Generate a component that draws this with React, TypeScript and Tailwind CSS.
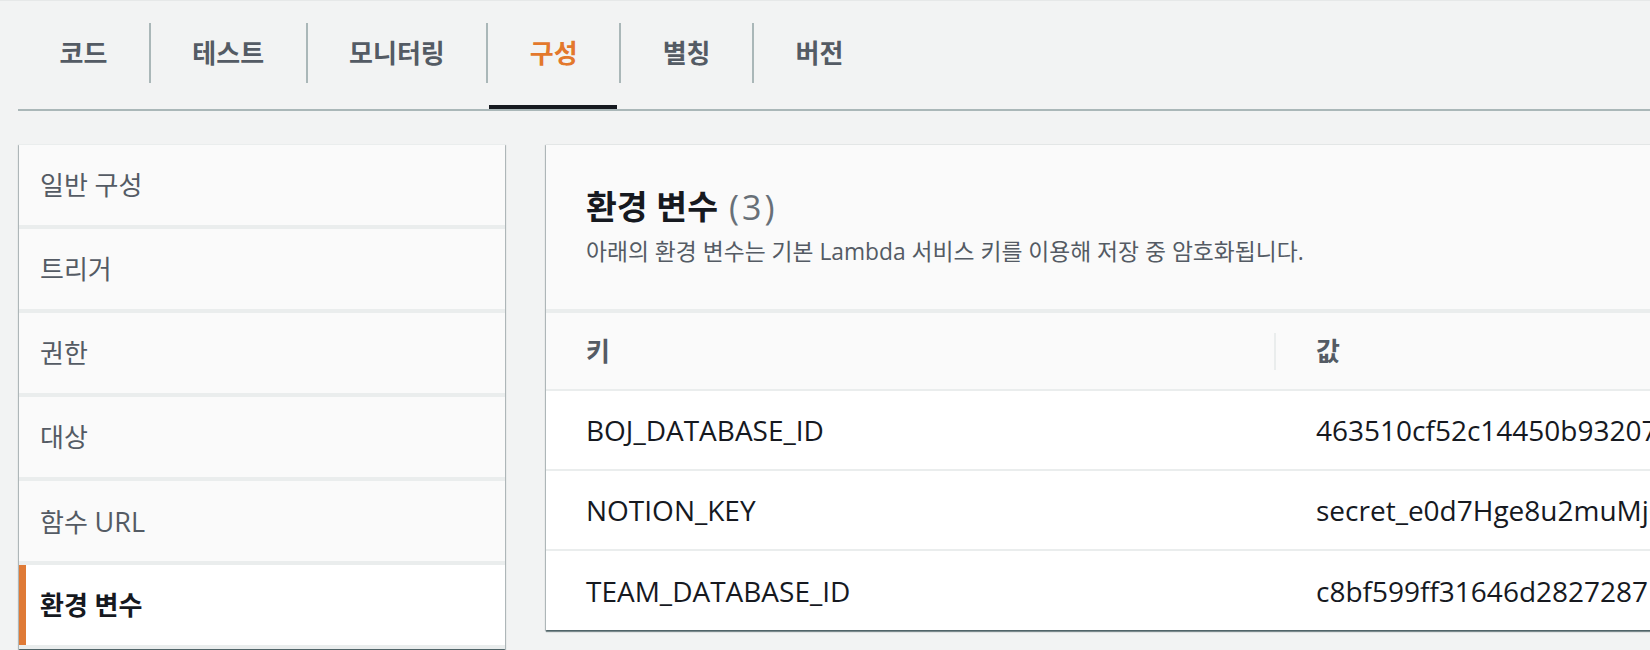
import React from 'react'

const tabs = ['코드', '테스트', '모니터링', '구성', '별칭', '버전']
const activeTab = 3

const navItems: { label: React.ReactNode; active?: boolean }[] = [
  { label: '일반 구성' },
  { label: '트리거' },
  { label: '권한' },
  { label: '대상' },
  {
    label: (
      <span>
        함수 <span className="text-[27px]">URL</span>
      </span>
    ),
  },
  { label: '환경 변수', active: true },
]

const envVars = [
  { key: 'BOJ_DATABASE_ID', value: '463510cf52c14450b93207e1a' },
  { key: 'NOTION_KEY', value: 'secret_e0d7Hge8u2muMj6xQ2' },
  { key: 'TEAM_DATABASE_ID', value: 'c8bf599ff31646d28272871b' },
]

const cardShadow =
  'shadow-[0_2px_1px_0_rgba(0,28,36,0.45),1px_1px_1px_0_rgba(0,28,36,0.22),-1px_1px_1px_0_rgba(0,28,36,0.22)]'

const App: React.FC = () => {
  return (
    <div className="w-[1650px] h-[650px] overflow-hidden bg-[#f2f3f3] border-t border-[#e6e8e8] font-['Open_Sans','Noto_Sans_CJK_KR',sans-serif]">
      {/* tabs */}
      <div className="ml-[18px] flex border-b-2 border-[#aab7b8]">
        {tabs.map((tab, i) => (
          <div key={tab} className="relative h-[108px] pt-[22px]">
            <div
              className={`flex h-[60px] items-center px-[41.5px] text-[26px] font-bold leading-none ${
                i > 0 ? 'border-l-2 border-[#aab7b8]' : ''
              } ${i === activeTab ? 'text-[#e3782c]' : 'text-[#545b64]'}`}
            >
              {tab}
            </div>
            {i === activeTab && (
              <span className="absolute bottom-0 left-[3px] right-[2px] h-[4px] bg-[#16191f]" />
            )}
          </div>
        ))}
      </div>

      <div className="mt-[33px] flex items-start">
        {/* side nav */}
        <div className={`ml-[19px] w-[486px] shrink-0 border-t border-b-4 border-[#eaeded] bg-[#eaeded] flex flex-col gap-[4px] ${cardShadow}`}>
          {navItems.map((item, i) => (
            <div
              key={i}
              className={`flex h-[80px] items-center text-[26px] leading-none ${
                item.active
                  ? 'border-l-[7px] border-[#df7a36] bg-white pl-[14px] font-bold text-[#16191f]'
                  : 'bg-[#fafafa] pl-[21px] text-[#545b64]'
              }`}
            >
              {item.label}
            </div>
          ))}
        </div>

        {/* env vars panel */}
        <div className={`ml-[41px] w-[1200px] shrink-0 border-t border-[#e3e6e6] bg-white ${cardShadow}`}>
          <div className="bg-[#fafafa] pl-[40px] pt-[42px] pb-[43px]">
            <h2 className="h-[40px] flex items-center text-[33.5px] font-bold leading-none text-[#16191f]">
              환경 변수
              <span className="ml-[11px] text-[34px] font-normal tracking-[3px] text-[#687078]">(3)</span>
            </h2>
            <p className="mt-[11px] h-[28px] flex items-center text-[22.8px] leading-none text-[#545b64]">
              아래의 환경 변수는 기본 Lambda 서비스 키를 이용해 저장 중 암호화됩니다.
            </p>
          </div>

          <div className="flex h-[82px] items-center border-t-4 border-b-2 border-[#eaeded] bg-[#fafafa] text-[26px] font-bold leading-none text-[#545b64]">
            <div className="w-[728px] pl-[40px]">키</div>
            <div className="h-[37px] w-[2px] bg-[#eaeded]" />
            <div className="pl-[40px]">값</div>
          </div>

          {envVars.map((row, i) => (
            <div
              key={row.key}
              className={`flex items-center text-[28px] leading-none text-[#16191f] whitespace-nowrap ${
                i < envVars.length - 1 ? 'h-[80px] border-b-2 border-[#eaeded]' : 'h-[79px]'
              }`}
            >
              <div className="w-[730px] pl-[40px]">{row.key}</div>
              <div className="pl-[40px]">{row.value}</div>
            </div>
          ))}
        </div>
      </div>
    </div>
  )
}

export default App
